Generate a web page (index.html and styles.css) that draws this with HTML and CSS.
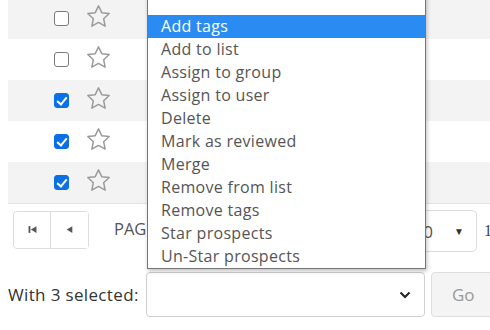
FILE: index.html
```html
<!DOCTYPE html>
<html lang="en">
<head>
    <meta charset="UTF-8">
    <meta name="viewport" content="width=device-width, initial-scale=1.0">
    <title>Prospects - Bulk actions</title>
    <link rel="stylesheet" href="styles.css">
</head>
<body>
    <div id="app">
        <div class="prospect-table">
            <div class="row odd">
                <span class="check"></span>
                <svg class="star" viewBox="0 0 24 24"><path d="M12 2.5l2.9 6.1 6.6.8-4.9 4.6 1.3 6.6L12 17.3l-5.9 3.3 1.3-6.6-4.9-4.6 6.6-.8z"/></svg>
            </div>
            <div class="row">
                <span class="check"></span>
                <svg class="star" viewBox="0 0 24 24"><path d="M12 2.5l2.9 6.1 6.6.8-4.9 4.6 1.3 6.6L12 17.3l-5.9 3.3 1.3-6.6-4.9-4.6 6.6-.8z"/></svg>
            </div>
            <div class="row odd">
                <span class="check checked"></span>
                <svg class="star" viewBox="0 0 24 24"><path d="M12 2.5l2.9 6.1 6.6.8-4.9 4.6 1.3 6.6L12 17.3l-5.9 3.3 1.3-6.6-4.9-4.6 6.6-.8z"/></svg>
            </div>
            <div class="row">
                <span class="check checked"></span>
                <svg class="star" viewBox="0 0 24 24"><path d="M12 2.5l2.9 6.1 6.6.8-4.9 4.6 1.3 6.6L12 17.3l-5.9 3.3 1.3-6.6-4.9-4.6 6.6-.8z"/></svg>
            </div>
            <div class="row odd">
                <span class="check checked"></span>
                <svg class="star" viewBox="0 0 24 24"><path d="M12 2.5l2.9 6.1 6.6.8-4.9 4.6 1.3 6.6L12 17.3l-5.9 3.3 1.3-6.6-4.9-4.6 6.6-.8z"/></svg>
            </div>
        </div>

        <div class="pager">
            <div class="pager-btns">
                <button class="pager-btn">
                    <svg viewBox="0 0 8 8"><rect x="0.5" y="1" width="1.6" height="6"/><path d="M7.5 1v6L2.5 4z"/></svg>
                </button>
                <button class="pager-btn">
                    <svg viewBox="0 0 8 8"><path d="M6.5 1v6L1.5 4z"/></svg>
                </button>
            </div>
            <div class="pager-label">PAGE 1 OF 1</div>
            <div class="page-size">
                <span>10</span>
                <span class="caret">&#9660;</span>
            </div>
            <div class="pager-info">1 - 5 of 5</div>
        </div>

        <div class="bulk-bar">
            <label class="bulk-label">With 3 selected:</label>
            <div class="bulk-select">
                <svg class="chevron" viewBox="0 0 12 8"><path d="M1.5 1.5L6 6l4.5-4.5"/></svg>
            </div>
            <button class="go-btn">Go</button>
        </div>

        <ul class="action-list">
            <li></li>
            <li class="selected">Add tags</li>
            <li>Add to list</li>
            <li>Assign to group</li>
            <li>Assign to user</li>
            <li>Delete</li>
            <li>Mark as reviewed</li>
            <li>Merge</li>
            <li>Remove from list</li>
            <li>Remove tags</li>
            <li>Star prospects</li>
            <li>Un-Star prospects</li>
        </ul>
    </div>
</body>
</html>
```

FILE: styles.css
```css
* {
    margin: 0;
    padding: 0;
    box-sizing: border-box;
}

body {
    font-family: "Open Sans", "Liberation Sans", sans-serif;
    background: white;
    color: #444;
    width: 490px;
    height: 330px;
    overflow: hidden;
}

#app {
    position: relative;
    width: 490px;
    height: 330px;
    overflow: hidden;
}

/* table rows */
.prospect-table {
    margin: -2px 0 0 8px;
    border-bottom: 1px solid #e2e2e2;
}

.row {
    height: 41px;
    display: flex;
    align-items: center;
    padding-left: 46px;
    background: white;
}

.row.odd {
    background: #f3f3f3;
}

.check {
    width: 15px;
    height: 15px;
    border: 1.5px solid #7a7a7a;
    border-radius: 3px;
    background: white;
    position: relative;
    flex-shrink: 0;
}

.check.checked {
    background: #0b6fe6;
    border-color: #0b6fe6;
}

.check.checked::after {
    content: "";
    position: absolute;
    left: 3.5px;
    top: 0.5px;
    width: 4px;
    height: 8px;
    border: solid white;
    border-width: 0 2px 2px 0;
    transform: rotate(40deg);
}

.star {
    width: 27px;
    height: 27px;
    margin-left: 16px;
    margin-top: -5px;
    fill: none;
    stroke: #9a9a9a;
    stroke-width: 1.3;
    stroke-linejoin: round;
}

/* pager */
.pager {
    display: flex;
    align-items: center;
    height: 44px;
    margin-top: 5px;
    padding-left: 13px;
}

.pager-btns {
    display: flex;
    border: 1px solid #dcdcdc;
    border-radius: 4px;
    height: 38px;
    margin-top: -3px;
    flex-shrink: 0;
}

.pager-btn {
    width: 37px;
    height: 36px;
    background: white;
    border: none;
    display: flex;
    align-items: center;
    justify-content: center;
}

.pager-btn:first-child {
    border-right: 1px solid #dcdcdc;
    border-radius: 4px 0 0 4px;
}

.pager-btn svg {
    width: 9px;
    height: 9px;
    fill: #555;
}

.pager-label {
    flex: 1;
    margin-left: 25px;
    font-size: 16.5px;
    color: #555;
    margin-top: -5px;
    white-space: nowrap;
    overflow: hidden;
}

.page-size {
    width: 96px;
    height: 42px;
    border: 1px solid #dcdcdc;
    border-radius: 5px;
    display: flex;
    align-items: center;
    justify-content: flex-end;
    padding-right: 12px;
    font-size: 17px;
    color: #555;
    flex-shrink: 0;
}

.page-size .caret {
    font-size: 10px;
    margin-left: 21px;
    color: #333;
}

.pager-info {
    width: 13px;
    padding-left: 7px;
    white-space: nowrap;
    overflow: hidden;
    font-family: "Liberation Serif", serif;
    font-size: 16px;
    color: #444;
    flex-shrink: 0;
}

/* bulk action bar */
.bulk-bar {
    display: flex;
    align-items: center;
    margin-top: 19px;
    padding-left: 8px;
}

.bulk-label {
    width: 138px;
    flex-shrink: 0;
    font-size: 17px;
    letter-spacing: 0.35px;
    color: #333;
    white-space: nowrap;
}

.bulk-select {
    width: 279px;
    height: 45px;
    flex-shrink: 0;
    border: 1px solid #cfcfcf;
    border-radius: 4px;
    display: flex;
    align-items: center;
    justify-content: flex-end;
    padding-right: 13px;
}

.chevron {
    width: 12px;
    height: 8px;
    fill: none;
    stroke: #222;
    stroke-width: 2;
}

.go-btn {
    width: 70px;
    height: 45px;
    margin-left: 6px;
    flex-shrink: 0;
    background: #f4f4f4;
    border: 1px solid #dedede;
    border-radius: 4px;
    text-align: left;
    padding-left: 20px;
    font-family: inherit;
    font-size: 17px;
    color: #999;
}

/* open dropdown list */
.action-list {
    position: absolute;
    left: 147px;
    top: -9px;
    width: 279px;
    list-style: none;
    background: white;
    border: 1px solid #767676;
    box-shadow: 1px 2px 4px rgba(0,0,0,0.25);
}

.action-list li {
    height: 23px;
    line-height: 23px;
    padding-left: 13px;
    font-size: 16px;
    letter-spacing: 0.3px;
    color: #555;
    white-space: nowrap;
}

.action-list li.selected {
    background: #2a8cf2;
    color: white;
}
```
